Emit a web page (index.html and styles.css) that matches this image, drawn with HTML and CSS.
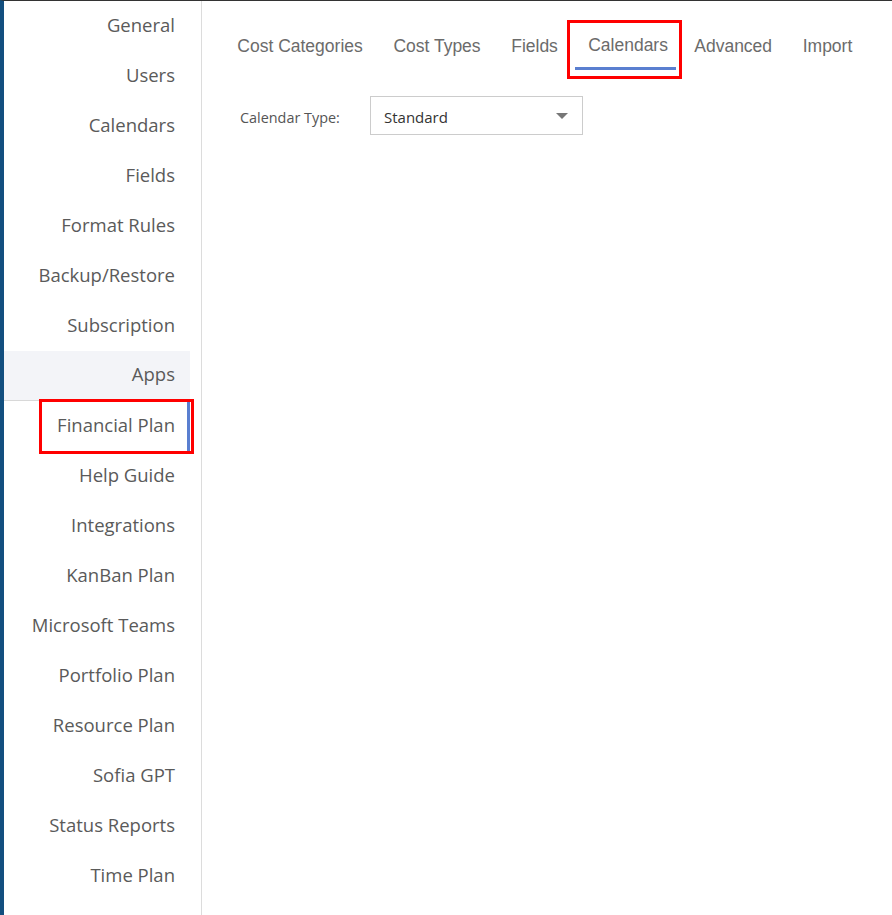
FILE: index.html
```html
<!DOCTYPE html>
<html lang="en">
<head>
    <meta charset="UTF-8">
    <title>Settings - Apps</title>
    <link rel="stylesheet" href="styles.css">
</head>
<body>
    <div class="page">
        <aside class="sidebar">
            <ul>
                <li><a href="#">General</a></li>
                <li><a href="#">Users</a></li>
                <li><a href="#">Calendars</a></li>
                <li><a href="#">Fields</a></li>
                <li><a href="#">Format Rules</a></li>
                <li><a href="#">Backup/Restore</a></li>
                <li><a href="#">Subscription</a></li>
                <li class="group"><a href="#">Apps</a></li>
                <li class="active"><a href="#">Financial Plan</a><span class="highlight"></span></li>
                <li><a href="#">Help Guide</a></li>
                <li><a href="#">Integrations</a></li>
                <li><a href="#">KanBan Plan</a></li>
                <li><a href="#">Microsoft Teams</a></li>
                <li><a href="#">Portfolio Plan</a></li>
                <li><a href="#">Resource Plan</a></li>
                <li><a href="#">Sofia GPT</a></li>
                <li><a href="#">Status Reports</a></li>
                <li><a href="#">Time Plan</a></li>
            </ul>
        </aside>

        <main class="content">
            <nav class="tabs">
                <a href="#" class="tab">Cost Categories</a>
                <a href="#" class="tab">Cost Types</a>
                <a href="#" class="tab">Fields</a>
                <a href="#" class="tab active">Calendars<span class="highlight"></span></a>
                <a href="#" class="tab">Advanced</a>
                <a href="#" class="tab">Import</a>
            </nav>

            <div class="form-row">
                <label for="calType">Calendar Type:</label>
                <div class="select" id="calType">
                    <span>Standard</span>
                    <span class="caret"></span>
                </div>
            </div>
        </main>
    </div>
</body>
</html>
```

FILE: styles.css
```css
/* Global Styles */
body {
    margin: 0;
    padding: 0;
    background: #fff;
    font-family: "Open Sans", "Noto Sans", sans-serif;
}

a {
    text-decoration: none;
}

ul {
    list-style-type: none;
    margin: 0;
    padding: 0;
}

.page {
    display: flex;
    min-height: 915px;
    border-top: 1px solid #333;
    border-left: 4px solid #134f7f;
    box-sizing: border-box;
}

/* Sidebar */
.sidebar {
    width: 197px;
    flex-shrink: 0;
    border-right: 1px solid #dcdcdc;
}

.sidebar ul {
    width: 186px;
}

.sidebar li {
    position: relative;
    height: 50px;
    display: flex;
    align-items: center;
    justify-content: flex-end;
    padding: 0 15px 4px 0;
    box-sizing: border-box;
}

.sidebar li a {
    color: #5a5a5a;
    font-size: 18.5px;
}

.sidebar li.group {
    background-color: #f3f4f8;
    border-bottom: 1px solid #d8d8d8;
}

.sidebar li.active {
    border-right: 3px solid #5a7fd0;
    padding-right: 12px;
}

.sidebar li.active .highlight {
    position: absolute;
    left: 35px;
    right: -7px;
    top: -2px;
    bottom: -3px;
    border: 3px solid #f00;
}

/* Main content */
.content {
    flex: 1;
    padding: 20px 0 0 20px;
}

.tabs {
    display: flex;
    height: 49px;
}

.tab {
    position: relative;
    display: flex;
    align-items: center;
    padding: 1px 15.3px 0;
    color: #6b6b6b;
    font-family: "Liberation Sans", Arial, sans-serif;
    font-size: 17.5px;
}

.tab.active {
    padding: 0 11px 0 15px;
}

.tab.active::after {
    content: "";
    position: absolute;
    left: 2px;
    right: 3px;
    bottom: 0;
    height: 3px;
    background-color: #5a7fd0;
}

.tab.active .highlight {
    position: absolute;
    left: -6px;
    right: -3px;
    top: -1px;
    bottom: -9px;
    border: 3px solid #f00;
}

.form-row {
    display: flex;
    align-items: center;
    gap: 30px;
    margin: 26px 0 0 18px;
}

.form-row label {
    width: 100px;
    padding-top: 3px;
    white-space: nowrap;
    color: #555;
    font-size: 14.4px;
}

.select {
    position: relative;
    width: 198px;
    height: 35px;
    display: flex;
    align-items: center;
    padding: 2px 0 0 13px;
    box-sizing: content-box;
    border: 1px solid #ccc;
    color: #333;
    font-size: 15px;
}

.select .caret {
    position: absolute;
    right: 14px;
    top: 16px;
    border-left: 6px solid transparent;
    border-right: 6px solid transparent;
    border-top: 6px solid #777;
}
```
